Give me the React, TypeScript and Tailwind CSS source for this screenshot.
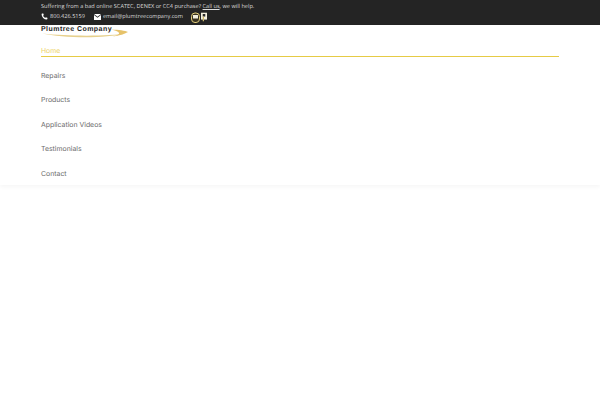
import { Phone } from "lucide-react";

const links = ["Repairs", "Products", "Application Videos", "Testimonials", "Contact"];

function Swoosh() {
  return (
    <svg width="88" height="10" viewBox="0 0 88 10" className="mt-[-4px] block">
      <path d="M1 4.5 C 22 9, 62 10, 85 4.5 C 68 7.2, 28 7.5, 1 4.5 Z" fill="#e6d08c" />
      <path d="M70 0.5 C 78 0.8, 84 1.5, 87 3 C 83 5, 78 6.5, 72 7.5 C 79 5.5, 82 3.5, 70 0.5 Z" fill="#e6c26a" />
    </svg>
  );
}

function MailIcon() {
  return (
    <svg width="7" height="6" viewBox="0 0 7 6" className="ml-[1px] mr-[2px] shrink-0">
      <path d="M0 0 H7 L3.5 2.8 Z" fill="#fff" />
      <path d="M0 1 L3.5 3.8 L7 1 V6 H0 Z" fill="#fff" />
    </svg>
  );
}

function SocialBadges() {
  return (
    <div className="ml-[8px] flex items-end gap-px pt-[1px]">
      <svg width="9" height="11" viewBox="0 0 9 11">
        <rect x="0.5" y="1" width="8" height="9.5" rx="3.5" fill="#3a3320" stroke="#e0cd7c" />
        <rect x="2" y="3" width="5" height="3.5" fill="#f1eddc" />
      </svg>
      <svg width="6" height="10" viewBox="0 0 7 10" className="mb-[1px]">
        <rect width="7" height="8" fill="#f4f0de" />
        <rect x="2" y="1.5" width="3" height="3" fill="#2a2a2a" />
        <rect x="2" y="4.5" width="1.5" height="5.5" fill="#cbb768" />
      </svg>
    </div>
  );
}

export default function App() {
  return (
    <div className="h-[400px] w-[600px] overflow-hidden bg-white [text-rendering:geometricPrecision]">
      <div className="h-[25px] bg-[#242424] pl-[41px] pt-[2px] font-['Open_Sans',sans-serif] text-[5.6px] leading-[9px] text-[#dcdcdc]">
        <p>
          Suffering from a bad online SCATEC, DENEX or CC4 purchase? <span className="underline">Call us</span>, we will help.
        </p>
        <div className="flex items-start">
          <div className="flex items-center pt-[1px]">
            <Phone size={7} fill="currentColor" strokeWidth={0} className="mr-[2px] text-white" />
            <span>800.426.5159</span>
          </div>
          <div className="ml-[8px] flex items-center pt-[1px]">
            <MailIcon />
            <span>email@plumtreecompany.com</span>
          </div>
          <SocialBadges />
        </div>
      </div>
      <header className="h-[160px] bg-white shadow-[0_2px_4px_rgba(0,0,0,0.04)]">
        <div className="mx-[41px] w-[518px]">
          <div className="h-[12px] pt-[0.5px] font-['Liberation_Sans',sans-serif] text-[7px] font-bold leading-[7.5px] tracking-[0.45px] text-[#222]">
            <span className="block">Plumtree Company</span>
            <Swoosh />
          </div>
          <nav className="pt-[8px] font-['Inter',sans-serif] text-[6.9px] leading-[11px] text-[#6b6b6b]">
            <div className="h-[12px] border-b border-[#e6cb45] text-[#edd365]">Home</div>
            <ul className="pt-[12.5px]">
              {links.map((link) => (
                <li key={link} className="h-[24.5px]">{link}</li>
              ))}
            </ul>
          </nav>
        </div>
      </header>
    </div>
  );
}
